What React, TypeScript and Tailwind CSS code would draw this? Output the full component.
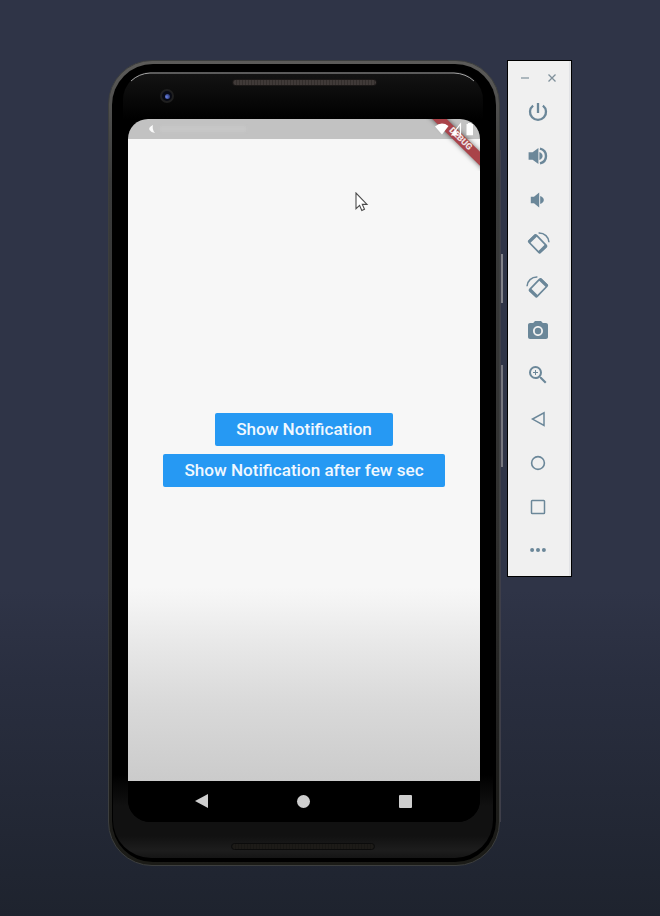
import type { ReactNode } from "react";
import { MdCameraAlt, MdZoomIn } from "react-icons/md";

function Icon({ size = 24, children }: { size?: number; children: ReactNode }) {
  return (
    <svg width={size} height={size} viewBox="0 0 24 24" fill="none" stroke="currentColor" strokeWidth="1.6">
      {children}
    </svg>
  );
}

function Speaker({ loud }: { loud?: boolean }) {
  return (
    <Icon>
      <g transform={loud ? "translate(0 0)" : "translate(2.2 0)"}>
        <path d={loud ? "M2.6 8.3h4L12.4 4v16l-5.8-4.3h-4z" : "M2.6 8.8h3.2L11 4.6v14.8l-5.2-4.2H2.6z"} fill="currentColor" stroke="none" />
        <path d={loud ? "M13.4 8q3.2 1.4 3.2 4t-3.2 4z" : "M12 8q3.6 1.6 3.6 4T12 16z"} fill="currentColor" stroke="none" />
        {loud && <path d="M14 4.6C18 5.6 20 8.6 20 12s-2 6.4-6 7.4" strokeWidth="2.4" />}
      </g>
    </Icon>
  );
}

function Rotate({ right }: { right?: boolean }) {
  return (
    <Icon>
      <g transform={right ? "translate(24 0.6) scale(-1 1)" : "translate(0 0.6)"}>
        <g transform="rotate(46 11.6 12.2)">
          <rect x="3.5" y="7.1" width="16.2" height="10.2" rx="1" strokeWidth="1.7" />
          <path d="M4.4 7.1v10.2M18.8 7.1v10.2" strokeWidth="3" />
        </g>
        <path d="M12.6 1.4C18.5 1.2 22.8 5.4 23 10.6" strokeWidth="1.5" />
      </g>
    </Icon>
  );
}

const tools: { name: string; icon: ReactNode }[] = [
  {
    name: "Power",
    icon: (
      <Icon>
        <path d="M12 3v10M7.1 5.6a8 8 0 1 0 9.8 0" strokeWidth="2.3" />
      </Icon>
    ),
  },
  { name: "Volume up", icon: <Speaker loud /> },
  { name: "Volume down", icon: <Speaker /> },
  { name: "Rotate left", icon: <Rotate /> },
  { name: "Rotate right", icon: <Rotate right /> },
  { name: "Screenshot", icon: <MdCameraAlt size={24} /> },
  { name: "Zoom", icon: <MdZoomIn size={24} /> },
  { name: "Back", icon: <Icon><path d="M18 5.8v12.6L6.5 12.1z" strokeWidth="1.5" /></Icon> },
  { name: "Home", icon: <Icon><circle cx="12" cy="12" r="6.4" strokeWidth="1.6" /></Icon> },
  { name: "Overview", icon: <Icon><rect x="5.5" y="5.5" width="13" height="13" rx=".8" strokeWidth="1.5" /></Icon> },
  {
    name: "More",
    icon: (
      <Icon>
        <g fill="currentColor" stroke="none">
          <circle cx="6.1" cy="12" r="2" />
          <circle cx="12" cy="12" r="2" />
          <circle cx="17.9" cy="12" r="2" />
        </g>
      </Icon>
    ),
  },
];

function Toolbar() {
  return (
    <aside className="mt-[60px] ml-[7px] flex h-[517px] w-[65px] shrink-0 flex-col border border-black bg-[#f0f0f0] text-[#6b8799] shadow-[inset_-2px_0_0_#e2e3e6]">
      <div className="flex h-[29px] items-center justify-center gap-[19px] pt-[4px] pr-[3px] text-[#7f909b]">
        <svg width="8" height="8" stroke="currentColor" strokeWidth="1.2"><path d="M0 4h8" /></svg>
        <svg width="8" height="8" stroke="currentColor" strokeWidth="1.3"><path d="M.5.5l7 7M7.5.5l-7 7" /></svg>
      </div>
      {tools.map((t) => (
        <button key={t.name} aria-label={t.name} className="flex h-[43.85px] shrink-0 items-center justify-center pr-[3px]">
          {t.icon}
        </button>
      ))}
    </aside>
  );
}

function StatusBar() {
  return (
    <div className="flex h-5 shrink-0 items-center bg-[#c2c2c2] pl-[20px]">
      <svg width="8" height="10" viewBox="0 0 8 10"><path d="M5 1Q0 3.5 1.5 6T7 9Q3.8 5.5 5 1" fill="#fafafa" /></svg>
      <div className="ml-1 h-1.5 w-[86px] bg-[#c7c7c7] blur-[1px]" />
    </div>
  );
}

function DebugBanner() {
  return (
    <div className="absolute top-0 right-0 h-[52px] w-[54px] overflow-hidden">
      <div className="absolute top-[15.5px] left-[-7.5px] flex h-[9.5px] w-[84px] rotate-[44.5deg] items-center justify-center bg-[#a94349] pr-[2px] font-['Roboto'] text-[8.8px] leading-none font-black text-[#eee1e1] shadow-[0_0_5px_rgba(0,0,0,0.6)]">
        DEBUG
      </div>
      <svg className="absolute top-0 left-0" width="54" height="24" fill="#fff">
        <path d="M9 7.5Q15.5 2 22.5 7L16 15.5z" />
        <path d="M34.5 5v11L26 16z" fill="none" stroke="#fff" strokeWidth="1.2" />
        <path d="M30.5 10.5v5.5H26z" />
        <path d="M40.5 5h1.5V4h3.5v1H47v11.2h-6.5z" />
      </svg>
    </div>
  );
}

function Screen() {
  return (
    <div className="relative flex h-[703px] flex-col overflow-hidden rounded-t-[20px] rounded-b-[22px] bg-black">
      <StatusBar />
      <main className="flex grow flex-col items-center gap-[8px] bg-[linear-gradient(to_bottom,#f7f7f7_0,#f7f7f7_448px,#f3f3f3_465px,#e8e8e8_505px,#d9d9d9_565px,#cbcbcb_642px)] pt-[273.5px] font-['Roboto'] text-[17.1px] font-medium text-[#f0f8ff]">
        <button className="h-[33px] w-[178px] rounded-[2px] bg-[#2699f3] pt-[2px] whitespace-nowrap">Show Notification</button>
        <button className="h-[33px] w-[282px] rounded-[2px] bg-[#2699f3] pt-[2px] whitespace-nowrap">Show Notification after few sec</button>
      </main>
      <nav className="flex h-[41px] shrink-0 items-center justify-between bg-black pr-[68px] pb-[1px] pl-[67px] text-[#cecece]">
        <svg width="13" height="14" fill="currentColor"><path d="M13 0v14L0 7z" /></svg>
        <div className="size-[13px] rounded-full bg-current" />
        <div className="size-[13px] rounded-[1px] bg-current" />
      </nav>
      <DebugBanner />
      <svg className="absolute top-[73px] left-[227px]" width="14" height="20" viewBox="0 0 14 20">
        <path d="M1 1v15.7l3.6-3.3 2.2 5 2.7-1.2-2.2-4.8H12z" fill="#fff" stroke="#4b4b4b" strokeWidth="1.1" />
      </svg>
    </div>
  );
}

function Phone() {
  return (
    <div className="relative mt-[60px] ml-[108px] h-[806px] w-[392px] shrink-0">
      <div className="absolute top-[90px] right-[-1px] h-[672px] w-[3px] bg-[#3e3e49]" />
      <div className="absolute top-[194px] right-[-3px] h-[49px] w-[2px] bg-[#83838a]" />
      <div className="absolute top-[305px] right-[-3px] h-[102px] w-[2px] bg-[#77777f]" />
      <div className="relative h-full rounded-[44px] border border-[#3c3e3e] bg-[linear-gradient(to_bottom,#5c5b59,#3a3b3b_15%,#30302f_60%,#20201f_85%,#1b1b17)] p-[3px]">
        <div className="relative h-full rounded-[41px] bg-black px-[16px] pt-[55px]">
          <div className="absolute top-[8px] right-[13px] left-[11px] h-[47px] rounded-t-[28px] bg-[linear-gradient(to_bottom,#141414,#080808_60%,#000)]" />
          <svg className="absolute top-[8px] left-[16px]" width="352" height="14" fill="none" stroke="#a3a3a3">
            <path d="M3 9Q11 1.5 22 1h304q12 .5 20 8" />
          </svg>
          <div className="absolute right-[3px] bottom-[4px] left-[1px] h-[185px] rounded-b-[38px] bg-[linear-gradient(to_bottom,#000_0,#000_55%,#111_72%,#111_88%,#1d1d1d_96%,#151515)]" />
          <div className="absolute top-[25px] left-[48px] flex size-[14px] items-center justify-center rounded-full border-2 border-[#1f1f1f] bg-[#080a14]">
            <span className="size-[5px] rounded-full bg-[radial-gradient(circle_at_30%_60%,#6a82e8,#172048)]" />
          </div>
          <div className="absolute top-[15px] left-[120px] h-[7px] w-[145px] rounded-full border border-[#1b1817] bg-[repeating-linear-gradient(to_right,#332e2c_0_1px,#403a38_1px_3px)]" />
          <div className="absolute bottom-[12px] left-[119px] h-[7px] w-[144px] rounded-full border border-[#0b0b0b] bg-[repeating-linear-gradient(to_right,#181714_0_1px,#1d1b18_1px_3px)]" />
          <Screen />
        </div>
      </div>
    </div>
  );
}

export default function App() {
  return (
    <div className="flex h-[916px] w-[660px] items-start overflow-hidden bg-[linear-gradient(to_bottom,#2f3447_0,#2f3447_590px,#292e3f_680px,#242937_790px,#1e232e_916px)]">
      <Phone />
      <Toolbar />
    </div>
  );
}
